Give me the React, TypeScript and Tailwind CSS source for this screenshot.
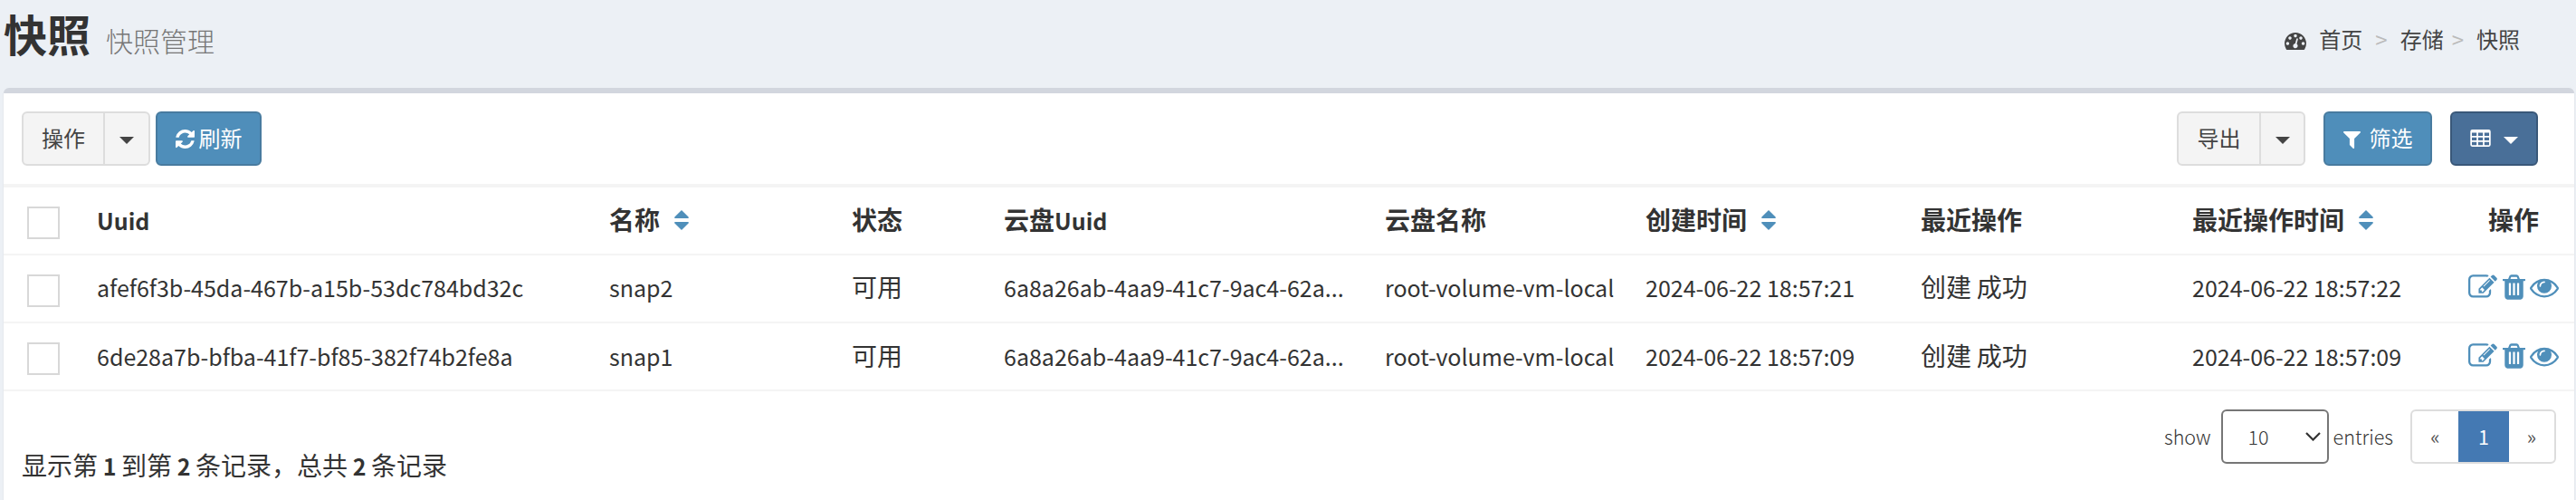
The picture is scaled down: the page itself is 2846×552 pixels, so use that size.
import React from "react";

const ICONS = {
  edit: "M888 1184l116-116-152-152-116 116v56h96v96h56zm440-720q-16-16-33 1l-350 350q-17 17-1 33t33-1l350-350q17-17 1-33zm80 594v190q0 119-84.5 203.5t-203.5 84.5h-832q-119 0-203.5-84.5t-84.5-203.5v-832q0-119 84.5-203.5t203.5-84.5h832q63 0 117 25 15 7 18 23 3 17-9 29l-49 49q-14 14-32 8-23-6-45-6h-832q-66 0-113 47t-47 113v832q0 66 47 113t113 47h832q66 0 113-47t47-113v-126q0-13 9-22l64-64q15-15 35-7t20 29zm-96-738l288 288-672 672h-288v-288zm444 132l-92 92-288-288 92-92q28-28 68-28t68 28l152 152q28 28 28 68t-28 68z",
  trash:
    "M704 1376v-704q0-14-9-23t-23-9h-64q-14 0-23 9t-9 23v704q0 14 9 23t23 9h64q14 0 23-9t9-23zm256 0v-704q0-14-9-23t-23-9h-64q-14 0-23 9t-9 23v704q0 14 9 23t23 9h64q14 0 23-9t9-23zm256 0v-704q0-14-9-23t-23-9h-64q-14 0-23 9t-9 23v704q0 14 9 23t23 9h64q14 0 23-9t9-23zm-544-992h448l-48-117q-7-9-17-11h-317q-10 2-17 11zm928 32v64q0 14-9 23t-23 9h-96v948q0 83-47 143.5t-113 60.5h-832q-66 0-113-58.5t-47-141.5v-952h-96q-14 0-23-9t-9-23v-64q0-14 9-23t23-9h309l70-167q15-37 54-63t79-26h320q40 0 79 26t54 63l70 167h309q14 0 23 9t9 23z",
  eye: "M1664 960q-152-236-381-353 61 104 61 225 0 185-131.5 316.5t-316.5 131.5-316.5-131.5-131.5-316.5q0-121 61-225-229 117-381 353 133 205 333.5 326.5t434.5 121.5 434.5-121.5 333.5-326.5zm-720-384q0-20-14-34t-34-14q-125 0-214.5 89.5t-89.5 214.5q0 20 14 34t34 14 34-14 14-34q0-86 61-147t147-61q20 0 34-14t14-34zm848 384q0 34-20 69-140 230-376.5 368.5t-499.5 138.5-499.5-139-376.5-368q-20-35-20-69t20-69q140-229 376.5-368t499.5-139 499.5 139 376.5 368q20 35 20 69z",
  filter:
    "M1595 295q17 41-14 70l-493 493v742q0 42-39 59-13 5-25 5-27 0-45-19l-256-256q-19-19-19-45v-486l-493-493q-31-29-14-70 17-39 59-39h1280q42 0 59 39z",
  refresh:
    "M1511 928q0 5-1 7-64 268-268 434.5t-478 166.5q-146 0-282.5-55t-243.5-157l-129 129q-19 19-45 19t-45-19-19-45v-448q0-26 19-45t45-19h448q26 0 45 19t19 45-19 45l-137 137q71 66 161 102t187 36q134 0 250-65t186-179q11-17 53-117 8-23 30-23h192q13 0 22.5 9.5t9.5 22.5zm25-800v448q0 26-19 45t-45 19h-448q-26 0-45-19t-19-45 19-45l138-138q-148-137-349-137-134 0-250 65t-186 179q-11 17-53 117-8 23-30 23h-199q-13 0-22.5-9.5t-9.5-22.5v-7q65-268 270-434.5t480-166.5q146 0 284 55.5t245 156.5l130-129q19-19 45-19t45 19 19 45z",
  gauge:
    "M384 1152q0-53-37.5-90.5t-90.5-37.5-90.5 37.5-37.5 90.5 37.5 90.5 90.5 37.5 90.5-37.5 37.5-90.5zm192-448q0-53-37.5-90.5t-90.5-37.5-90.5 37.5-37.5 90.5 37.5 90.5 90.5 37.5 90.5-37.5 37.5-90.5zm428 481l101-382q6-26-7.5-48.5t-38.5-29.5-48 6.5-30 39.5l-101 382q-60 5-107 43.5t-63 98.5q-20 77 20 146t117 89 146-20 89-117q16-60-6-117t-72-91zm660-33q0-53-37.5-90.5t-90.5-37.5-90.5 37.5-37.5 90.5 37.5 90.5 90.5 37.5 90.5-37.5 37.5-90.5zm-640-640q0-53-37.5-90.5t-90.5-37.5-90.5 37.5-37.5 90.5 37.5 90.5 90.5 37.5 90.5-37.5 37.5-90.5zm448 192q0-53-37.5-90.5t-90.5-37.5-90.5 37.5-37.5 90.5 37.5 90.5 90.5 37.5 90.5-37.5 37.5-90.5zm320 448q0 261-141 483-19 29-54 29h-1402q-35 0-54-29-141-221-141-483 0-182 71-348t191-286 286-191 348-71 348 71 286 191 191 286 71 348z",
  table:
    "M224 128h1344a160 160 0 0 1 160 160v1088a160 160 0 0 1-160 160H224a160 160 0 0 1-160-160V288a160 160 0 0 1 160-160zM192 384v256h384V384zM704 384v256h384V384zM1216 384v256h384V384zM192 768v256h384V768zM704 768v256h384V768zM1216 768v256h384V768zM192 1152v256h384v-256zM704 1152v256h384v-256zM1216 1152v256h384v-256z",
};

function Icon({ name, box, className }: { name: keyof typeof ICONS; box: string; className: string }) {
  return (
    <svg viewBox={box} className={`block shrink-0 ${className}`} fill="currentColor" fillRule="evenodd" aria-hidden="true">
      <path d={ICONS[name]} />
    </svg>
  );
}

function Caret() {
  return (
    <svg viewBox="0 0 16 8" className="block h-2 w-4 shrink-0" fill="currentColor" aria-hidden="true">
      <path d="M0 0h16L8 8z" />
    </svg>
  );
}

function SortIcon() {
  return (
    <svg viewBox="0 0 16 22" className="ml-4 mt-[10px] block h-[22px] w-4 shrink-0" fill="#4f8fba" aria-hidden="true">
      <path d="M8 0l7.6 7.4q.8 1.6-.6 1.6H1Q-.4 9 .4 7.4zM8 22L.4 14.6Q-.4 13 1 13h14q1.400 0 .6 1.600z" />
    </svg>
  );
}

/* Latin glyphs are set slightly smaller than the ideographs next to them. */
function Mixed({ children }: { children: string }) {
  return (
    <>
      {children.split(/([\x20-\x7e]+)/).map((run, i) =>
        i % 2 ? (
          <span key={i} className="text-[25px] leading-none">
            {run}
          </span>
        ) : (
          run
        ),
      )}
    </>
  );
}

function Checkbox({ className }: { className: string }) {
  return <div className={`h-9 w-9 border-2 border-[#d8d8d8] bg-white ${className}`} />;
}

const COLUMNS = [
  { label: "Uuid" },
  { label: "名称", sort: true },
  { label: "状态" },
  { label: "云盘Uuid" },
  { label: "云盘名称" },
  { label: "创建时间", sort: true },
  { label: "最近操作" },
  { label: "最近操作时间", sort: true },
];

const ROWS = [
  ["afef6f3b-45da-467b-a15b-53dc784bd32c", "snap2", "可用", "6a8a26ab-4aa9-41c7-9ac4-62a...", "root-volume-vm-local", "2024-06-22 18:57:21", "创建 成功", "2024-06-22 18:57:22"],
  ["6de28a7b-bfba-41f7-bf85-382f74b2fe8a", "snap1", "可用", "6a8a26ab-4aa9-41c7-9ac4-62a...", "root-volume-vm-local", "2024-06-22 18:57:09", "创建 成功", "2024-06-22 18:57:09"],
];

const ROW =
  "grid h-[75px] grid-cols-[77px_566px_268px_168px_421px_288px_304px_300px_1fr] border-b-2 border-[#f4f4f4] pl-[26px] text-[28px] leading-[40px] whitespace-nowrap";

function SplitButton({ label, left, right }: { label: string; left: string; right: string }) {
  return (
    <div className="flex h-[60px] overflow-hidden rounded-md border-2 border-[#dddddd] bg-[#f4f4f4] text-[#444]">
      <div className={`flex items-center justify-center border-r-2 border-[#dddddd] pb-0.5 ${left}`}>{label}</div>
      <div className={`flex items-center justify-center pt-1 ${right}`}>
        <Caret />
      </div>
    </div>
  );
}

export default function App() {
  return (
    <div className="flex h-[552px] w-full flex-col overflow-hidden bg-[#ecf0f5] pl-1 pr-0.5 font-['Noto_Sans_CJK_SC',sans-serif] text-[#333]">
      <header className="flex h-[97px] shrink-0 justify-between">
        <h1 className="flex items-baseline text-[48px] leading-[72px] font-bold">
          快照
          <small className="ml-[17px] text-[30px] font-light text-[#777]">快照管理</small>
        </h1>
        <nav className="flex h-[86px] items-center pr-[60px] text-[24px] text-[#444]">
          <Icon name="gauge" box="0 256 1792 1408" className="mr-[14px] mt-1 h-[19px] w-6" />
          <span>首页</span>
          <span className="mx-[14px] text-[24px] text-[#bbb]">&gt;</span>
          <span>存储</span>
          <span className="mr-[14px] ml-[9px] text-[24px] text-[#bbb]">&gt;</span>
          <span>快照</span>
        </nav>
      </header>

      <main className="flex flex-1 flex-col rounded-t-md border-t-[6px] border-[#d2d6de] bg-white shadow-[0_2px_2px_rgba(0,0,0,0.1)]">
        <div className="flex h-[100px] shrink-0 justify-between pl-5 pr-10 pt-5 text-[24px]">
          <div className="flex gap-1.5">
            <SplitButton label="操作" left="w-[90px]" right="w-12" />
            <button className="flex h-[60px] w-[117px] items-center justify-center gap-[5px] rounded-md border-2 border-[#487b9f] bg-[#4f8eba] text-white">
              <Icon name="refresh" box="0 0 1536 1536" className="h-[21px] w-[21px]" />
              <span className="pb-0.5">刷新</span>
            </button>
          </div>
          <div className="flex gap-5">
            <SplitButton label="导出" left="w-[91px]" right="w-[47px]" />
            <button className="flex h-[60px] w-[120px] items-center justify-center gap-[10px] rounded-md border-2 border-[#487b9f] bg-[#4f8eba] text-white">
              <Icon name="filter" box="192 256 1408 1408" className="mt-0.5 h-[19px] w-[19px]" />
              <span className="pb-0.5">筛选</span>
            </button>
            <button className="flex h-[60px] w-[97px] items-center justify-center gap-[14px] rounded-md border-2 border-[#395879] bg-[#496f98] text-white">
              <Icon name="table" box="64 128 1664 1408" className="mb-0.5 h-[19px] w-[23px]" />
              <span className="pt-1">
                <Caret />
              </span>
            </button>
          </div>
        </div>

        <section className="shrink-0 border-t-4 border-[#f4f4f4]">
          <div className={`${ROW} pt-[15px] font-bold`}>
            <Checkbox className="mt-1.5" />
            {COLUMNS.map((c) => (
              <div key={c.label} className="flex">
                <span>
                  <Mixed>{c.label}</Mixed>
                </span>
                {c.sort && <SortIcon />}
                {c.label === "最近操作时间" && <span className="ml-[127px]">操作</span>}
              </div>
            ))}
          </div>
          {ROWS.map((row, r) => (
            <div key={row[0]} className={`${ROW} ${r === 0 ? "pt-[14px]" : "pt-[15px]"}`}>
              <Checkbox className={r === 0 ? "mt-[7px]" : "mt-1.5"} />
              {row.map((cell, i) => (
                <div key={i} className="flex">
                  <span>
                    <Mixed>{cell}</Mixed>
                  </span>
                  {i === 7 && (
                    <div className="ml-[74px] flex gap-[6px] pt-[5px] text-[#4f8fba]">
                      <Icon name="edit" box="0 0 1792 1792" className="h-8 w-8" />
                      <Icon name="trash" box="192 0 1408 1792" className="h-8 w-[25px]" />
                      <Icon name="eye" box="0 0 1792 1792" className="-ml-px h-8 w-8" />
                    </div>
                  )}
                </div>
              ))}
            </div>
          ))}
        </section>

        <footer className="flex justify-between pl-5 pr-5">
          <p className="pt-[61px] text-[28px] leading-[40px]">
            显示第<Mixed> </Mixed>
            <b>
              <Mixed>1</Mixed>
            </b>
            <Mixed> </Mixed>到第<Mixed> </Mixed>
            <b>
              <Mixed>2</Mixed>
            </b>
            <Mixed> </Mixed>条记录，总共<Mixed> </Mixed>
            <b>
              <Mixed>2</Mixed>
            </b>
            <Mixed> </Mixed>条记录
          </p>
          <div className="mt-5 flex h-[60px] items-center text-[21.500px] font-light">
            <span>show</span>
            <div className="ml-[11px] mr-[5px] flex h-[60px] w-[119px] items-center justify-between rounded-md border-2 border-[#767676] bg-white pl-7 pr-[7px]">
              <span>10</span>
              <svg viewBox="0 0 17 10" className="h-[10px] w-[17px]" fill="none" stroke="#333" strokeWidth="2.200" aria-hidden="true">
                <path d="M1 1l7.500 7.500L16 1" />
              </svg>
            </div>
            <span>entries</span>
            <div className="ml-[19px] flex h-[60px] w-[161px] overflow-hidden rounded-md border-2 border-[#dddddd] bg-white text-[#555]">
              <span className="flex w-[51px] items-center justify-center font-normal">«</span>
              <span className="-my-0.5 flex w-14 items-center justify-center bg-[#4479b3] font-normal text-white">1</span>
              <span className="flex w-[50px] items-center justify-center font-normal">»</span>
            </div>
          </div>
        </footer>
      </main>
    </div>
  );
}
